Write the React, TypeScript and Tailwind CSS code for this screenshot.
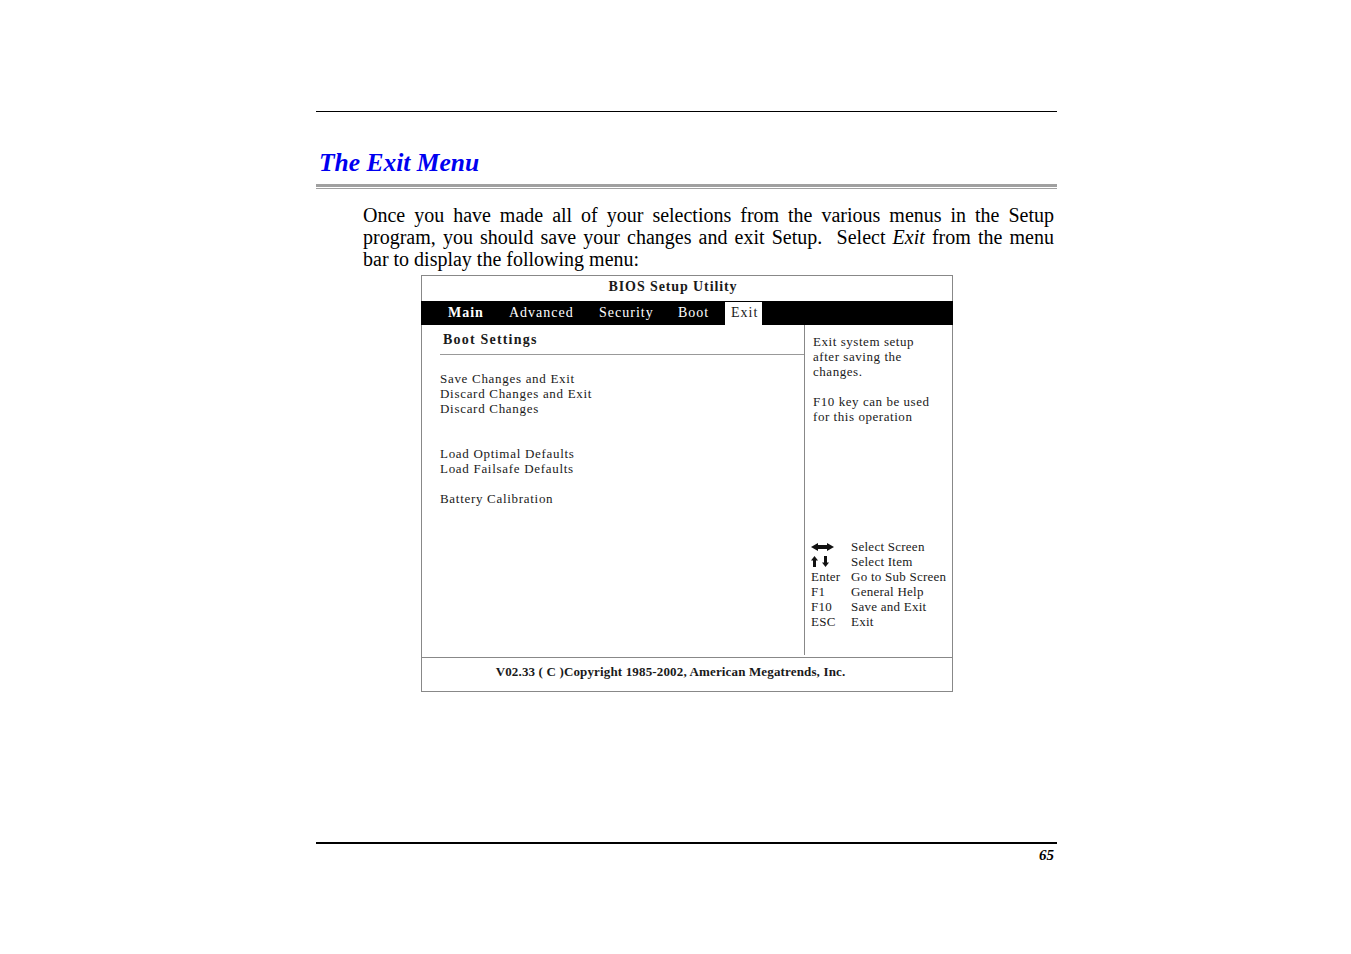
import React from "react";

const LRArrow = () => (
  <svg width="23" height="8" viewBox="0 0 23 8" className="block">
    <polygon points="0,4 7,0 7,8" fill="#111" />
    <rect x="6" y="2" width="11" height="4" fill="#111" />
    <polygon points="23,4 16,0 16,8" fill="#111" />
  </svg>
);

const UDArrow = () => (
  <svg width="19" height="11" viewBox="0 0 19 11" className="block">
    <polygon points="0,4.5 3.5,0 7,4.5" fill="#111" />
    <rect x="2" y="4" width="3" height="7" fill="#111" />
    <polygon points="11,6.5 14.5,11 18,6.5" fill="#111" />
    <rect x="13" y="0" width="3" height="7" fill="#111" />
  </svg>
);

export default function App() {
  const items = [
    "Save Changes and Exit",
    "Discard Changes and Exit",
    "Discard Changes",
    "",
    "",
    "Load Optimal Defaults",
    "Load Failsafe Defaults",
    "",
    "Battery Calibration",
  ];
  const help = [
    "Exit system setup",
    "after saving the",
    "changes.",
    "",
    "F10 key can be used",
    "for this operation",
  ];
  const legend: [React.ReactNode, string][] = [
    [<LRArrow />, "Select Screen"],
    [<UDArrow />, "Select Item"],
    ["Enter", "Go to Sub Screen"],
    ["F1", "General Help"],
    ["F10", "Save and Exit"],
    ["ESC", "Exit"],
  ];
  return (
    <div className="min-h-[954px] bg-white pt-[111px] font-['Liberation_Serif',serif] text-black">
      <div className="ml-[316px] w-[741px]">
        <div className="h-px bg-black" />
        <h1 className="mt-[35px] pl-[3px] text-[25.5px] leading-[32px] font-bold italic text-[#0000f0]">
          The Exit Menu
        </h1>
        <div className="mt-[5px] h-[3px] bg-[#a0a0a0]" />
        <div className="mt-px h-px bg-[#a0a0a0]" />
        <p className="ml-[47px] mt-[15px] w-[691px] text-[20px] leading-[22px]">
          <span className="block text-justify [text-align-last:justify]">
            Once you have made all of your selections from the various menus in the Setup
          </span>
          <span className="block text-justify [text-align-last:justify]">
            program, you should save your changes and exit Setup.&nbsp; Select <i>Exit</i> from the menu
          </span>
          <span className="block">bar to display the following menu:</span>
        </p>

        <div className="ml-[105px] mt-[5px] w-[532px] border border-[#888] text-[#1a1a1a]">
          <div className="h-[25px] pt-[2px] pr-[28px] text-center text-[14px] leading-[18px] font-bold tracking-[0.9px]">
            BIOS Setup Utility
          </div>
          <div className="-mx-px flex h-[24px] bg-black pl-[27px] text-[14px] leading-[18px] tracking-[1px] text-white">
            <span className="flex w-[61px] items-center font-bold">Main</span>
            <span className="flex w-[90px] items-center">Advanced</span>
            <span className="flex w-[79px] items-center">Security</span>
            <span className="flex w-[47px] items-center">Boot</span>
            <span className="mt-px flex w-[37px] items-center bg-white pb-px pl-[6px] text-[#1a1a1a]">Exit</span>
          </div>
          <div className="flex h-[332px]">
            <div className="w-[382px]">
              <div className="pl-[21px] pt-[6px] text-[14px] leading-[18px] font-bold tracking-[1.2px]">
                Boot Settings
              </div>
              <div className="ml-[18px] mt-[5px] h-px bg-[#999]" />
              <div className="mt-[16px] pl-[18px] text-[13px] leading-[15px] tracking-[0.7px]">
                {items.map((t, i) => (
                  <div key={i} className="h-[15px] whitespace-pre">
                    {t}
                  </div>
                ))}
              </div>
            </div>
            <div className="mb-[2px] flex-1 border-l border-[#888] text-[13px] leading-[15px]">
              <div className="pl-[8px] pt-[9px] tracking-[0.55px]">
                {help.map((t, i) => (
                  <div key={i} className="h-[15px] whitespace-pre">
                    {t}
                  </div>
                ))}
              </div>
              <div className="mt-[115px] pl-[6px] tracking-[0.25px]">
                {legend.map(([k, d], i) => (
                  <div key={i} className="flex h-[15px] items-center">
                    <span className="flex w-[40px] items-center">{k}</span>
                    <span className="whitespace-pre">{d}</span>
                  </div>
                ))}
              </div>
            </div>
          </div>
          <div className="h-[34px] border-t border-[#888] pt-[6px] pr-[33px] text-center text-[13px] leading-[16px] font-bold tracking-[0.15px]">
            V02.33 ( C )Copyright 1985-2002, American Megatrends, Inc.
          </div>
        </div>

        <div className="mt-[150px] h-[2px] bg-black" />
        <div className="mt-[2px] pr-[3px] text-right text-[15px] leading-[18px] font-bold italic">
          65
        </div>
      </div>
    </div>
  );
}
